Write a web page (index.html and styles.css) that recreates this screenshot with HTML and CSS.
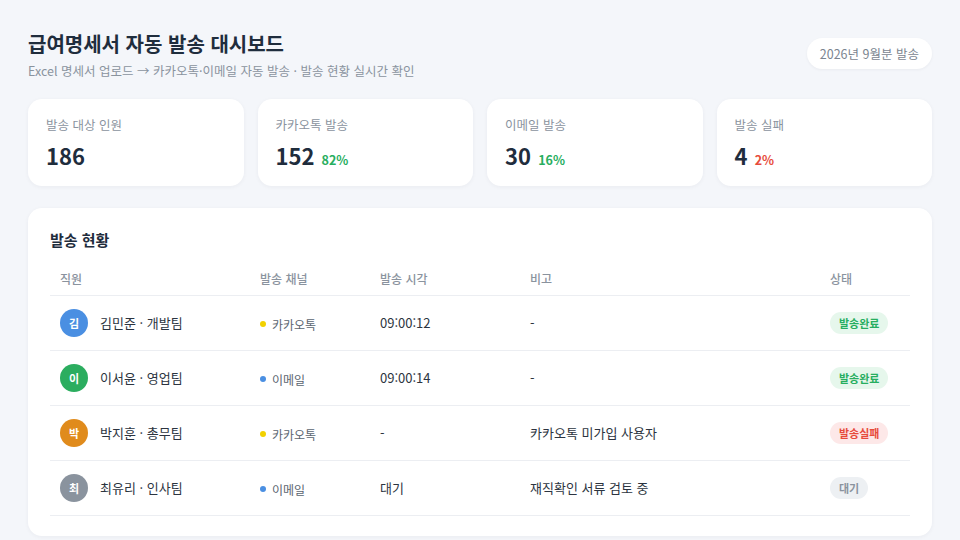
FILE: index.html
```html
<!DOCTYPE html>
<html lang="ko">
<head>
<meta charset="utf-8">
<link rel="stylesheet" href="styles.css">
</head>
<body>
<div class="page">
  <header class="top">
    <div class="titles">
      <h1 class="title">급여명세서 자동 발송 대시보드</h1>
      <p class="subtitle">Excel 명세서 업로드 → 카카오톡·이메일 자동 발송 · 발송 현황 실시간 확인</p>
    </div>
    <div class="period">2026년 9월분 발송</div>
  </header>

  <section class="stats">
    <div class="stat">
      <div class="stat-label">발송 대상 인원</div>
      <div class="stat-value">186</div>
    </div>
    <div class="stat">
      <div class="stat-label">카카오톡 발송</div>
      <div class="stat-value">152 <span class="pct ok">82%</span></div>
    </div>
    <div class="stat">
      <div class="stat-label">이메일 발송</div>
      <div class="stat-value">30 <span class="pct ok">16%</span></div>
    </div>
    <div class="stat">
      <div class="stat-label">발송 실패</div>
      <div class="stat-value">4 <span class="pct bad">2%</span></div>
    </div>
  </section>

  <section class="panel">
    <h2 class="panel-title">발송 현황</h2>
    <table class="table">
      <colgroup>
        <col class="c1"><col class="c2"><col class="c3"><col class="c4"><col class="c5">
      </colgroup>
      <thead>
        <tr><th>직원</th><th>발송 채널</th><th>발송 시각</th><th>비고</th><th>상태</th></tr>
      </thead>
      <tbody>
        <tr>
          <td><div class="emp"><span class="avatar blue">김</span>김민준 · 개발팀</div></td>
          <td><span class="chan"><span class="dot kakao"></span>카카오톡</span></td>
          <td>09:00:12</td>
          <td>-</td>
          <td><span class="badge done">발송완료</span></td>
        </tr>
        <tr>
          <td><div class="emp"><span class="avatar green">이</span>이서윤 · 영업팀</div></td>
          <td><span class="chan"><span class="dot mail"></span>이메일</span></td>
          <td>09:00:14</td>
          <td>-</td>
          <td><span class="badge done">발송완료</span></td>
        </tr>
        <tr>
          <td><div class="emp"><span class="avatar orange">박</span>박지훈 · 총무팀</div></td>
          <td><span class="chan"><span class="dot kakao"></span>카카오톡</span></td>
          <td>-</td>
          <td>카카오톡 미가입 사용자</td>
          <td><span class="badge fail">발송실패</span></td>
        </tr>
        <tr>
          <td><div class="emp"><span class="avatar gray">최</span>최유리 · 인사팀</div></td>
          <td><span class="chan"><span class="dot mail"></span>이메일</span></td>
          <td>대기</td>
          <td>재직확인 서류 검토 중</td>
          <td><span class="badge wait">대기</span></td>
        </tr>
      </tbody>
    </table>
  </section>
</div>
</body>
</html>
```
FILE: styles.css
```css
* { box-sizing: border-box; }
html, body { margin: 0; padding: 0; }
body {
  background: #f4f6fa;
  font-family: "Noto Sans CJK KR", "Noto Sans", sans-serif;
  color: #1f2d3d;
  width: 960px;
  height: 540px;
  overflow: hidden;
}
.page { padding: 30px 28px 0 28px; }
.top {
  display: flex;
  justify-content: space-between;
  align-items: flex-start;
}
.title {
  margin: 0;
  font-size: 20px;
  font-weight: 700;
  line-height: 28px;
  color: #1f2d3d;
}
.subtitle {
  margin: 4px 0 0 0;
  font-size: 12.5px;
  line-height: 18px;
  color: #8a939e;
}
.period {
  margin-top: 8px;
  background: #fff;
  border-radius: 16px;
  height: 31px;
  line-height: 31px;
  padding: 0 13px;
  font-size: 12.5px;
  color: #7b8590;
  box-shadow: 0 1px 3px rgba(30, 40, 60, 0.05);
}
.stats {
  margin-top: 19px;
  display: grid;
  grid-template-columns: repeat(4, 1fr);
  gap: 14px;
}
.stat {
  background: #fff;
  border-radius: 14px;
  height: 87px;
  padding: 17px 18px 0 18px;
  box-shadow: 0 1px 4px rgba(30, 40, 60, 0.05);
}
.stat-label {
  font-size: 12.5px;
  color: #8a939e;
  line-height: 18px;
}
.stat-value {
  margin-top: 6px;
  font-size: 22px;
  font-weight: 700;
  line-height: 30px;
  color: #1f2d3d;
}
.pct {
  font-size: 12.5px;
  font-weight: 700;
  margin-left: 1px;
}
.pct.ok { color: #27ae60; }
.pct.bad { color: #e74c3c; }

.panel {
  margin-top: 22px;
  background: #fff;
  border-radius: 14px;
  height: 328px;
  padding: 21px 22px 0 22px;
  box-shadow: 0 1px 4px rgba(30, 40, 60, 0.05);
}
.panel-title {
  margin: 0;
  font-size: 15px;
  font-weight: 700;
  line-height: 22px;
  color: #1f2d3d;
}
.table {
  margin-top: 20px;
  width: 100%;
  border-collapse: collapse;
  table-layout: fixed;
}
.c1 { width: 200px; }
.c2 { width: 120px; }
.c3 { width: 150px; }
.c4 { width: 300px; }
.c5 { width: 90px; }
.table th {
  text-align: left;
  font-size: 12px;
  font-weight: 500;
  color: #8a939e;
  padding: 0 10px;
  height: 24px;
  vertical-align: top;
  line-height: 16px;
  border-bottom: 1px solid #eceef2;
}
.table td {
  height: 55px;
  padding: 0 10px;
  font-size: 13px;
  color: #2c3440;
  border-bottom: 1px solid #eceef2;
  vertical-align: middle;
}
.emp {
  display: flex;
  align-items: center;
  gap: 12px;
  color: #2c3440;
}
.avatar {
  width: 28px;
  height: 28px;
  border-radius: 50%;
  color: #fff;
  font-size: 11px;
  font-weight: 700;
  display: flex;
  align-items: center;
  justify-content: center;
  flex: none;
}
.avatar.blue { background: #4a8fe2; }
.avatar.green { background: #2bad5f; }
.avatar.orange { background: #e08b1c; }
.avatar.gray { background: #8a939e; }
.chan {
  display: inline-flex;
  align-items: center;
  gap: 6px;
  font-size: 12px;
  color: #5a6470;
  padding-top: 2px;
}
.dot {
  width: 6px;
  height: 6px;
  border-radius: 50%;
  display: inline-block;
}
.dot.kakao { background: #f2d100; }
.dot.mail { background: #4a8fe2; }
.badge {
  display: inline-block;
  height: 22px;
  line-height: 22px;
  padding: 0 9px;
  border-radius: 11px;
  font-size: 11px;
  font-weight: 700;
}
.badge.done { background: #e6f7ec; color: #27ae60; }
.badge.fail { background: #fde8e8; color: #e74c3c; }
.badge.wait { background: #edf0f3; color: #8a939e; }
```
